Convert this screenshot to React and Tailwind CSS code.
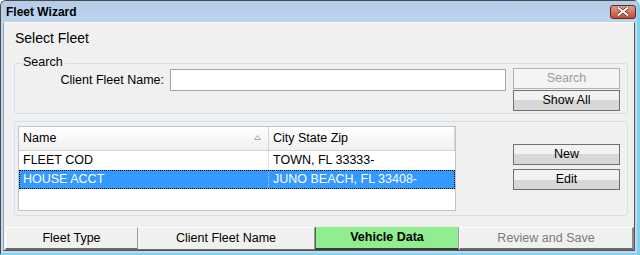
import React from "react"

const font = { fontFamily: '"Liberation Sans", Arial, sans-serif' }

function WinButton({ children, disabled, className = "" }) {
  return (
    <div
      className={
        "h-[21px] w-[107px] flex items-center justify-center border text-[12.5px] " +
        (disabled
          ? "border-[#adb2b5] bg-[#f4f4f4] text-[#9c9c9c] "
          : "border-[#707070] bg-linear-to-b from-[#f2f2f2] from-50% to-[#d8d8d8] to-50% text-black ") +
        className
      }
    >
      {children}
    </div>
  )
}

function CloseButton() {
  return (
    <div className="h-[14px] w-[26px] rounded-[3px] border border-[#5b2a2a] bg-linear-to-b from-[#e39a88] to-[#c44a33] flex items-center justify-center">
      <svg width="12" height="9" viewBox="0 0 12 9">
        <path d="M1.5 1 L10.5 8 M10.5 1 L1.5 8" stroke="#4a2020" strokeWidth="3.2" strokeLinecap="square" />
        <path d="M1.5 1 L10.5 8 M10.5 1 L1.5 8" stroke="#ffffff" strokeWidth="2" strokeLinecap="square" />
      </svg>
    </div>
  )
}

const rows = [
  { name: "FLEET COD", city: "TOWN, FL 33333-" },
  { name: "HOUSE ACCT", city: "JUNO BEACH, FL 33408-", selected: true },
]

export default function App() {
  return (
    <div
      style={font}
      className="w-[640px] h-[255px] flex flex-col bg-[#c4d8ed] border-t border-l border-[#4a4a4a] border-r-[3px] border-r-[#7fd3ef] border-b-[2px] border-b-[#7fd3ef] rounded-tl-[6px] rounded-tr-[6px] overflow-hidden"
    >
      <div className="h-[21px] flex items-center justify-between pl-[5px] pr-[1px] bg-linear-to-b from-[#b4cde8] to-[#bcd3eb]">
        <span className="text-[12px] font-bold text-black">Fleet Wizard</span>
        <CloseButton />
      </div>

      <div className="flex-1 ml-[2px] mr-[2px] mb-[2px] flex flex-col bg-[#f0f0f0] border-l border-l-[#8da3bd] border-r border-r-[#555] border-b border-b-[#555] border-t border-t-[#fafafa]">
        <div className="pl-[11px] pt-[7px] text-[14px] leading-[17px] text-black">Select Fleet</div>

        <div className="relative ml-[10px] mr-[6px] mt-[16px] h-[51px] rounded-[3px] border border-[#d5dfe5] flex">
          <span className="absolute -top-[9px] left-[6px] px-[2px] bg-[#f0f0f0] text-[12.5px] leading-[14px] text-black">
            Search
          </span>
          <div className="flex-1 flex items-start pt-[5px]">
            <div className="w-[149px] text-right text-[12.5px] leading-[22px] text-black">Client Fleet Name:</div>
            <div className="ml-[6px] w-[336px] h-[22px] bg-white border border-[#a5a5a5]" />
          </div>
          <div className="flex flex-col gap-[1px] pt-[4px] pr-[7px]">
            <WinButton disabled>Search</WinButton>
            <WinButton>Show All</WinButton>
          </div>
        </div>

        <div className="ml-[10px] mr-[6px] mt-[7px] h-[95px] rounded-[3px] border border-[#d5dfe5] flex">
          <div className="flex-1 pl-[3px] pt-[4px]">
            <div className="w-[438px] h-[85px] bg-white border border-[#b7c6d6] text-[12.5px]">
              <div className="flex h-[24px] bg-linear-to-b from-[#ffffff] to-[#efefef] border-b border-[#d5d5d5]">
                <div className="relative w-[250px] flex items-center pl-[4px] border-r border-[#d5d5d5] text-black">
                  Name
                  <svg className="absolute right-[7px] top-[8px]" width="7" height="5" viewBox="0 0 7 5">
                    <path d="M0.5 4.5 L3.5 0.5 L6.5 4.5 Z" fill="none" stroke="#a8a8a8" strokeWidth="1" />
                  </svg>
                </div>
                <div className="flex-1 flex items-center pl-[4px] border-r border-[#d5d5d5] text-black">City State Zip</div>
              </div>
              {rows.map((r) => (
                <div
                  key={r.name}
                  className={
                    "flex h-[19px] items-center " +
                    (r.selected ? "bg-[#3399ff] text-white outline outline-dotted outline-black -outline-offset-1" : "text-black")
                  }
                >
                  <div className="w-[250px] pl-[4px] border-r border-dotted border-[#c8c8c8]">{r.name}</div>
                  <div className="flex-1 pl-[4px]">{r.city}</div>
                </div>
              ))}
            </div>
          </div>
          <div className="flex flex-col gap-[4px] pt-[22px] pr-[7px]">
            <WinButton>New</WinButton>
            <WinButton>Edit</WinButton>
          </div>
        </div>

        <div className="mt-[11px] ml-[1px] flex h-[23px] text-[12.5px]">
          <div className="w-[133px] flex items-center justify-center border-t border-t-[#fdfdfd] border-l border-l-[#fdfdfd] border-b-2 border-b-[#6a6a6a] border-r border-r-[#9a9a9a] text-black">
            Fleet Type
          </div>
          <div className="w-[177px] flex items-end justify-center pb-[1px] border-t border-t-[#fdfdfd] border-r border-r-[#9a9a9a] border-b border-b-[#6a6a6a] text-black">
            Client Fleet Name
          </div>
          <div className="w-[144px] flex items-center justify-center bg-[#90ee90] border-l border-l-[#5a5a5a] border-b-2 border-b-[#3a3a3a] border-r border-r-[#a0a0a0] font-bold text-black">
            Vehicle Data
          </div>
          <div className="flex-1 flex items-center justify-center border-t border-t-[#fdfdfd] border-l border-l-[#fdfdfd] border-b-2 border-b-[#6a6a6a] border-r-2 border-r-[#8a8a8a] text-[#7a7a7a]">
            Review and Save
          </div>
        </div>
      </div>
    </div>
  )
}
